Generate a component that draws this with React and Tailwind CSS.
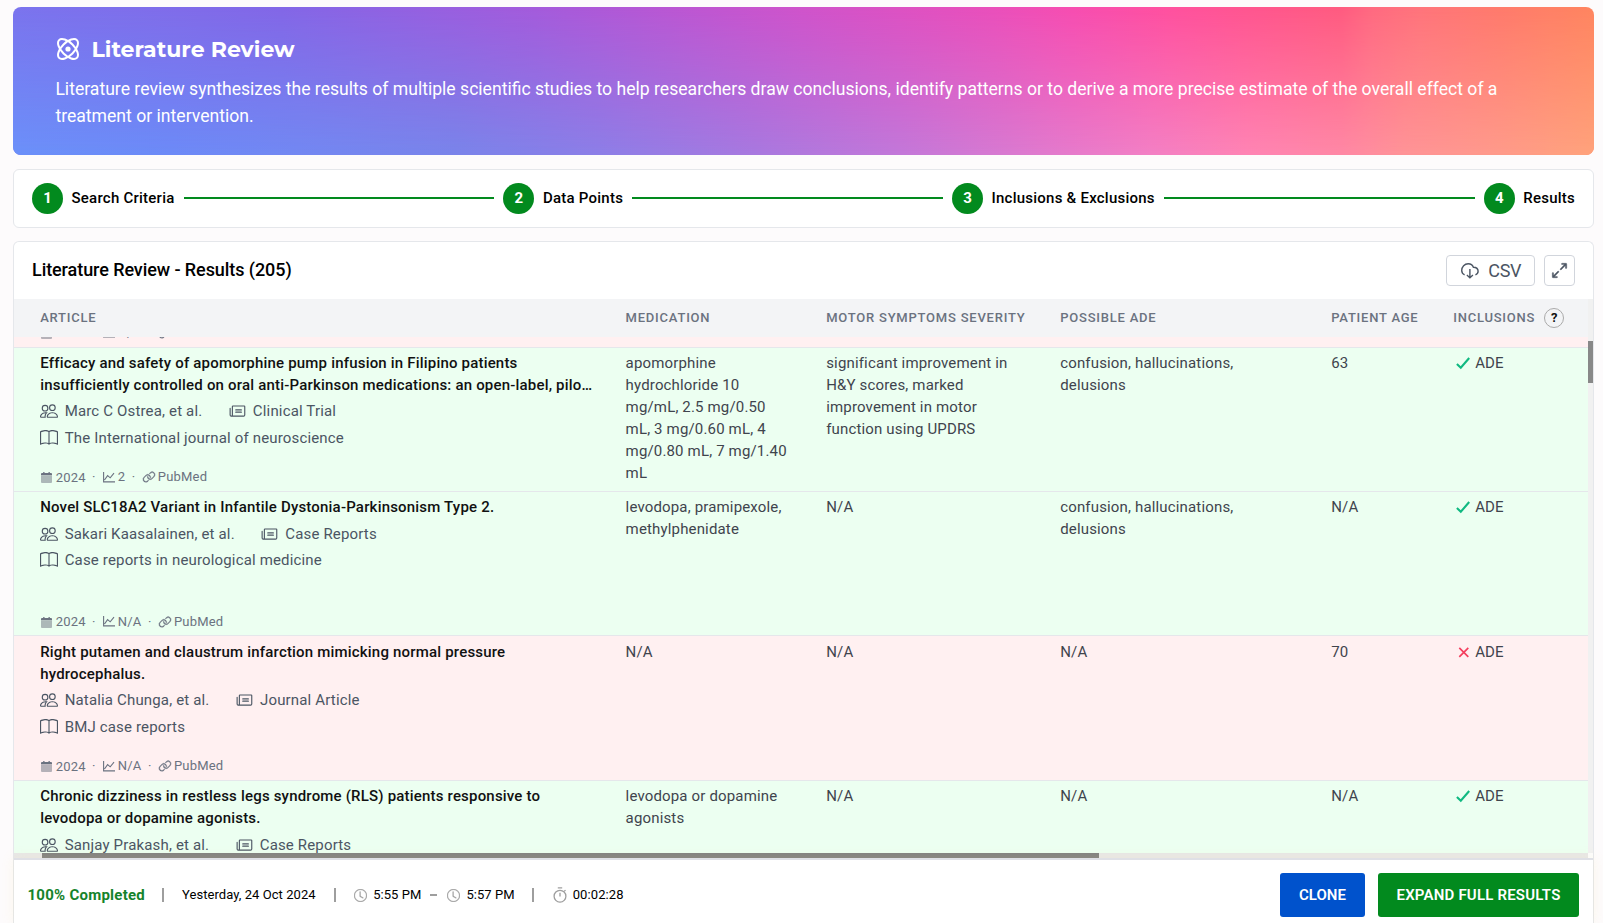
import { BsPeople, BsBook, BsClock } from "react-icons/bs";
import { PiNewspaper, PiArrowsOutSimple, PiLink } from "react-icons/pi";

const steps = ["Search Criteria", "Data Points", "Inclusions & Exclusions", "Results"];

const GRID = "grid grid-cols-[585.4px_200.6px_234px_271px_122px_1fr] pl-[26.2px]";

const rows = [
  {
    title: "Efficacy and safety of apomorphine pump infusion in Filipino patients insufficiently controlled on oral anti-Parkinson medications: an open-label, pilot study.",
    authors: "Marc C Ostrea, et al.", type: "Clinical Trial", journal: "The International journal of neuroscience", impact: "2",
    medication: "apomorphine hydrochloride 10 mg/mL, 2.5 mg/0.50 mL, 3 mg/0.60 mL, 4 mg/0.80 mL, 7 mg/1.40 mL",
    motor: "significant improvement in H&Y scores, marked improvement in motor function using UPDRS",
    ade: "confusion, hallucinations, delusions", age: "63", ok: true,
  },
  {
    title: "Novel SLC18A2 Variant in Infantile Dystonia-Parkinsonism Type 2.",
    authors: "Sakari Kaasalainen, et al.", type: "Case Reports", journal: "Case reports in neurological medicine", impact: "N/A",
    medication: "levodopa, pramipexole, methylphenidate", motor: "N/A", ade: "confusion, hallucinations, delusions", age: "N/A", ok: true,
  },
  {
    title: "Right putamen and claustrum infarction mimicking normal pressure hydrocephalus.",
    authors: "Natalia Chunga, et al.", type: "Journal Article", journal: "BMJ case reports", impact: "N/A",
    medication: "N/A", motor: "N/A", ade: "N/A", age: "70", ok: false,
  },
  {
    title: "Chronic dizziness in restless legs syndrome (RLS) patients responsive to levodopa or dopamine agonists.",
    authors: "Sanjay Prakash, et al.", type: "Case Reports", impact: "N/A",
    medication: "levodopa or dopamine agonists", motor: "N/A", ade: "N/A", age: "N/A", ok: true,
  },
];

function Atom() {
  return (
    <svg width="22" height="22" viewBox="0 0 22 22" fill="none" stroke="white" strokeWidth="2">
      <ellipse cx="11" cy="11" rx="12.6" ry="6.3" transform="rotate(45 11 11)" />
      <ellipse cx="11" cy="11" rx="12.6" ry="6.3" transform="rotate(-45 11 11)" />
      <circle cx="11" cy="11" r="2.6" fill="white" stroke="none" />
    </svg>
  );
}

function CloudDown() {
  return (
    <svg width="18" height="16" viewBox="0 0 18 16" className="mt-0.5" fill="none" stroke="currentColor" strokeWidth="1.4">
      <path d="M3.6 11.8C1.6 11 .7 9.5 .7 7.6 .7 3.6 3.6.8 7.2.8c2.6 0 4.4 1.2 5.2 3.4 2.9.1 4.7 1.8 4.7 4.1 0 1.6-1 2.9-2.7 3.5" />
      <path d="M8.9 6v8.6M5.9 12l3 2.9 3-2.9" />
    </svg>
  );
}

function Calendar() {
  return (
    <svg width="11" height="11" viewBox="0 0 11 11" className="shrink-0" fill="currentColor">
      <path d="M0 3.6h11V10a1 1 0 0 1-1 1H1a1 1 0 0 1-1-1z" opacity="0.5" />
      <path d="M0 3.2V2a1 1 0 0 1 1-1h1.2V0h1.3v1h4V0h1.3v1H10a1 1 0 0 1 1 1v1.2z" />
    </svg>
  );
}

function Chart() {
  return (
    <svg width="12" height="11" viewBox="0 0 12 11" className="ml-px shrink-0" fill="none" stroke="currentColor" strokeWidth="1.1">
      <path d="M.6 0v9.9H12M1.5 8 4.6 3.6l2.6 2.2L11 1.2" />
    </svg>
  );
}

function Check() {
  return (
    <svg width="14" height="14" viewBox="0 0 14 14" className="shrink-0" fill="none" stroke="#10b981" strokeWidth="2.1">
      <path d="M0.9 8 4.8 11.8 13.2 2" />
    </svg>
  );
}

function Cross() {
  return (
    <svg width="14" height="14" viewBox="0 0 14 14" className="shrink-0" fill="none" stroke="#f43f5e" strokeWidth="1.7">
      <path d="M3.3 2.8 12.3 11.8M12.3 2.8 3.3 11.8" />
    </svg>
  );
}

function Stopwatch() {
  return (
    <svg width="14" height="16" viewBox="0 0 14 16" className="shrink-0" fill="none" stroke="currentColor" strokeWidth="1.3">
      <circle cx="7" cy="9.2" r="5.9" />
      <path d="M4.8 0.9h4.4M7 5.8v3.8M11.2 4.4l1.3-1.3" />
    </svg>
  );
}

function Source({ impact }) {
  return (
    <div className="mt-auto flex items-center text-[13px] leading-[22px] tracking-[0.2px] text-[#6b7280]">
      <span className="mt-px ml-px flex items-center gap-[3.5px]"><Calendar /><span>2024</span></span>
      <span className="w-[16px] text-center">·</span>
      <Chart />
      <span className="ml-[3px]">{impact}</span>
      <span className="w-[16.5px] text-center">·</span>
      <PiLink size={14} className="stroke-[6]" />
      <span className="ml-[2px]">PubMed</span>
    </div>
  );
}

function Row({ r }) {
  return (
    <div className={`${GRID} h-[144.4px] border-b border-gray-200 pt-[4.2px] ${r.ok ? "bg-[#ecfff1]" : "bg-[#fff0f1]"}`}>
      <div className="flex flex-col pr-[33px] pb-[2.2px]">
        <div className="line-clamp-2 font-medium tracking-[0.19px] text-[#111]">{r.title}</div>
        <div className="mt-[4.6px] flex items-center text-[#4b5563]">
          <BsPeople size={18} />
          <span className="ml-[6.5px]">{r.authors}</span>
          <PiNewspaper size={18} className="ml-[26.5px]" />
          <span className="ml-[6px]">{r.type}</span>
        </div>
        {r.journal && (
          <div className="mt-[4.6px] flex items-center text-[#4b5563]">
            <BsBook size={18} />
            <span className="ml-[6.5px]">{r.journal}</span>
          </div>
        )}
        {r.journal && <Source impact={r.impact} />}
      </div>
      <div className="pr-[34px]">{r.medication}</div>
      <div className="pr-[34px]">{r.motor}</div>
      <div className="pr-[90px]">{r.ade}</div>
      <div>{r.age}</div>
      <div className="flex h-[22px] items-center gap-[5px] pl-[3px]">
        {r.ok ? <Check /> : <Cross />}
        <span>ADE</span>
      </div>
    </div>
  );
}

function Sep({ className }) {
  return <span className={`h-[14px] w-0.5 bg-[#9e9e9e] ${className}`} />;
}

export default function App() {
  return (
    <div className="flex h-[923px] w-[1603px] flex-col overflow-hidden bg-[#fdfbfc] pt-[7px] pr-[9px] pl-[13px] font-['Roboto',sans-serif]">
      <header className="relative h-[148px] shrink-0 overflow-hidden rounded-lg bg-[linear-gradient(to_right,#7b74ee_0%,#8367e7_17%,#a45bdc_33%,#d053cb_50%,#ea4fbb_62%,#f74db1_67%,#ff509f_73%,#ff5590_78%,#ff5b80_84%,#ff6a80_86%,#ff747b_89%,#ff7a6c_94%,#ff8560_100%)]">
        <div className="absolute inset-0 bg-[linear-gradient(to_right,#6b90f9_0%,#6c8af7_10%,#7288f2_18%,#7984ea_28%,#8c7ee7_37%,#a878df_47%,#c277d9_56%,#e67acb_67%,#f37fc4_72%,#ff84b4_78%,#ff88a5_84%,#ff9397_88%,#ff9a8a_94%,#ffa27b_100%)] [mask-image:linear-gradient(to_bottom,transparent,black)]" />
        <div className="relative px-[42px] pt-[26px] text-white">
          <h1 className="flex h-[32px] items-center gap-[12.5px] pl-[2px] font-['Montserrat','Inter',sans-serif] text-[22px] font-bold">
            <Atom />
            Literature Review
          </h1>
          <p className="mt-[11px] w-[1460px] pl-[0.4px] text-[17.6px] leading-[27px]">
            Literature review synthesizes the results of multiple scientific studies to help researchers draw conclusions, identify patterns or to derive a more precise estimate of the overall effect of a treatment or intervention.
          </p>
        </div>
      </header>

      <nav className="mt-[14px] flex h-[59px] shrink-0 items-center rounded-md border border-gray-200 bg-white px-[18px]">
        {steps.map((s, i) => (
          <div key={s} className={`flex items-center ${i < 3 ? "flex-auto" : ""}`}>
            <span className="flex size-[31px] shrink-0 items-center justify-center rounded-full bg-[#028a1e] text-[15px] font-bold text-white">{i + 1}</span>
            <span className="ml-[8.5px] text-[15px] font-medium tracking-[0.24px] whitespace-nowrap text-black">{s}</span>
            {i < 3 && <span className="mx-[9px] mb-0.5 h-0.5 flex-1 bg-[#028a1e]" />}
          </div>
        ))}
      </nav>

      <section className="mt-[13px] flex min-h-0 flex-1 flex-col rounded-t-md border border-b-0 border-gray-200 bg-white">
        <div className="flex h-[57px] shrink-0 items-center pr-[18px] pl-[18px]">
          <h2 className="-mt-0.5 text-[18px] font-medium tracking-[-0.08px] text-black">Literature Review - Results (205)</h2>
          <button className="ml-auto flex h-[31px] w-[89px] items-center justify-center gap-[9.5px] rounded border border-gray-300 pb-px pl-px text-[18px] tracking-[-0.3px] text-[#4b5563]">
            <CloudDown />
            CSV
          </button>
          <button className="ml-[9px] flex size-[31px] items-center justify-center rounded border border-gray-300 text-[#4b5563]">
            <PiArrowsOutSimple size={21} className="stroke-[5]" />
          </button>
        </div>

        <div className="flex h-[554px] shrink-0">
          <div className="flex min-w-0 flex-1 flex-col overflow-hidden">
            <div className={`${GRID} h-[38px] shrink-0 items-center bg-gray-100 text-[13px] font-medium tracking-[0.78px] whitespace-nowrap text-[#6b7280]`}>
              <span>ARTICLE</span>
              <span>MEDICATION</span>
              <span>MOTOR SYMPTOMS SEVERITY</span>
              <span>POSSIBLE ADE</span>
              <span>PATIENT AGE</span>
              <span className="flex items-center gap-[9px]">
                INCLUSIONS
                <span className="flex size-5 items-center justify-center rounded-full border border-[#aaa] text-[13px] font-bold tracking-normal text-[#111]">?</span>
              </span>
            </div>
            <div className="flex min-h-0 flex-1 flex-col overflow-hidden text-[15px] leading-[22px] tracking-[0.16px] text-[#3f444d]">
              <div className="flex h-[10.6px] shrink-0 flex-col justify-end overflow-hidden border-b border-gray-200 bg-[#fff0f1] pb-[2.2px] pl-[26px]">
                <Source impact="N/A" />
              </div>
              <div className="min-h-0 flex-1 overflow-hidden">
                {rows.map((r) => <Row key={r.title} r={r} />)}
              </div>
            </div>
          </div>
          <div className="w-[5px] bg-[#f1f1f1] pt-[42px]">
            <div className="h-[42px] bg-[#888]" />
          </div>
        </div>
        <div className="flex h-[5px] shrink-0 bg-[#e8e8e8] pl-7">
          <div className="w-[1057px] bg-[#828282]" />
          <div className="ml-auto w-[5px] bg-[#fcfcfc]" />
        </div>

        <footer className="flex flex-1 items-center border-t-2 border-[#dfe0e6] bg-white pt-[7px] pr-[14px] pl-[13.5px] text-[13px] tracking-[0.06px] text-black shadow-[0_0_12px_rgba(250,220,120,0.15)]">
          <span className="text-[15px] font-bold tracking-[0.25px] text-[#15832b]">100% Completed</span>
          <Sep className="ml-[17px]" />
          <span className="ml-[18px]">Yesterday, 24 Oct 2024</span>
          <Sep className="ml-[18px]" />
          <BsClock size={13} className="ml-[18.5px] stroke-[0.4] text-[#9e9e9e]" />
          <span className="ml-[6px]">5:55 PM</span>
          <span className="ml-[9px] h-0.5 w-[7px] bg-[#9e9e9e]" />
          <BsClock size={13} className="ml-[10px] stroke-[0.4] text-[#9e9e9e]" />
          <span className="ml-[6px]">5:57 PM</span>
          <Sep className="ml-[17.5px]" />
          <span className="ml-[18.5px] text-[#9e9e9e]"><Stopwatch /></span>
          <span className="ml-[6px] tracking-[0.1px]">00:02:28</span>
          <button className="ml-auto h-[44px] w-[85px] rounded-[3px] bg-[#0052cc] text-[15px] font-semibold text-white">CLONE</button>
          <button className="ml-[13px] h-[44px] w-[201px] rounded-[3px] bg-[#028a1e] text-[15px] font-semibold tracking-[0.2px] text-white">EXPAND FULL RESULTS</button>
        </footer>
      </section>
    </div>
  );
}
